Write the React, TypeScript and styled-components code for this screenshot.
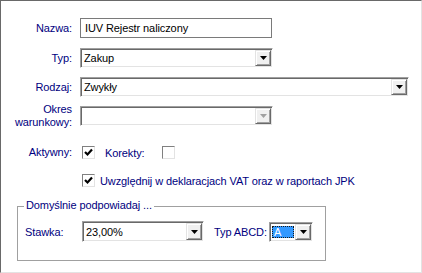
import React from 'react';
import styled, { createGlobalStyle } from 'styled-components';

const GlobalStyle = createGlobalStyle`
  body {
    margin: 0;
    background: #ffffff;
  }
`;

const Frame = styled.div`
  width: 422px;
  height: 273px;
  box-sizing: border-box;
  padding-top: 17px;
  background: #ffffff;
  border-top: 1px solid #696969;
  border-left: 1px solid #696969;
  border-right: 1px solid #e3e3e3;
  border-bottom: 1px solid #e3e3e3;

  font-family: 'Liberation Sans', Arial, sans-serif;
  font-size: 11px;
  letter-spacing: -0.1px;
  color: #000000;
`;

const Row = styled.div<{ $gap?: number }>`
  display: flex;
  align-items: center;
  height: 20px;
  margin-top: ${(p) => p.$gap ?? 0}px;
`;

const CheckRow = styled.div<{ $gap?: number }>`
  display: flex;
  align-items: center;
  height: 13px;
  margin-top: ${(p) => p.$gap ?? 0}px;
`;

const Label = styled.div`
  width: 71px;
  margin-right: 8px;
  text-align: right;
  color: #000080;
  line-height: 13px;
  white-space: nowrap;
`;

const Caption = styled.span<{ $left?: number; $width?: number }>`
  display: inline-block;
  color: #000080;
  margin-left: ${(p) => p.$left ?? 0}px;
  ${(p) => (p.$width ? `width: ${p.$width}px; flex: none;` : '')}
  white-space: nowrap;
`;

const TextBox = styled.div`
  width: 192px;
  height: 20px;
  box-sizing: border-box;
  border: 1px solid #7a7a7a;
  padding-left: 4px;
  display: flex;
  align-items: center;
`;

const Combo = styled.div<{ $width: number; $height?: number; $left?: number }>`
  width: ${(p) => p.$width}px;
  height: ${(p) => p.$height ?? 20}px;
  margin-left: ${(p) => p.$left ?? 0}px;
  flex: none;
  box-sizing: border-box;
  display: flex;
  align-items: stretch;
  background: #ffffff;
  border-top: 1px solid #a0a0a0;
  border-left: 1px solid #a0a0a0;
  border-right: 1px solid #ffffff;
  border-bottom: 1px solid #ffffff;
  box-shadow: inset 1px 1px 0 #696969, inset -1px -1px 0 #e3e3e3;
  padding: 1px;
`;

const ComboText = styled.div`
  flex: 1;
  display: flex;
  align-items: center;
  padding-left: 2px;
  white-space: nowrap;
  overflow: hidden;
`;

const Selected = styled.div`
  flex: 1;
  margin: 2px 1px 2px 1px;
  background: #3399ff;
  color: #ffffff;
  outline: 1px dotted #1a1a1a;
  outline-offset: -1px;
  display: flex;
  align-items: center;
  padding-left: 2px;
`;

const DropButton = styled.div<{ $disabled?: boolean }>`
  width: 16px;
  box-sizing: border-box;
  background: #f0f0f0;
  border-top: 1px solid #e3e3e3;
  border-left: 1px solid #e3e3e3;
  border-right: 1px solid #696969;
  border-bottom: 1px solid #696969;
  box-shadow: inset 1px 1px 0 #ffffff, inset -1px -1px 0 #a0a0a0;
  display: flex;
  align-items: center;
  justify-content: center;
  color: ${(p) => (p.$disabled ? '#a0a0a0' : '#000000')};
`;

const Check = styled.div<{ $left?: number }>`
  width: 13px;
  height: 13px;
  box-sizing: border-box;
  margin-left: ${(p) => p.$left ?? 0}px;
  background: #ffffff;
  border-top: 1px solid #808080;
  border-left: 1px solid #808080;
  border-right: 1px solid #e3e3e3;
  border-bottom: 1px solid #e3e3e3;
  display: flex;
  align-items: center;
  justify-content: center;
`;

const Group = styled.fieldset`
  width: 309px;
  box-sizing: border-box;
  margin: 12px 0 0 16px;
  padding: 0 0 18px 7px;
  border: 1px solid #a0a0a0;
`;

const Legend = styled.legend`
  padding: 0 2px 2px 2px;
  margin-left: -1px;
  line-height: 13px;
  color: #000080;
`;

const GroupRow = styled.div`
  display: flex;
  align-items: center;
  margin-top: 7px;
`;

const Arrow = () => (
  <svg width="7" height="4" viewBox="0 0 7 4">
    <path d="M0 0h7L3.5 4z" fill="currentColor" />
  </svg>
);

const Tick = () => (
  <svg width="9" height="9" viewBox="0 0 9 9">
    <polyline points="1,4 3.5,6.5 8,1.5" fill="none" stroke="#000" strokeWidth="2.2" />
  </svg>
);

const App = () => {
  return (
    <>
      <GlobalStyle />
      <Frame>
        <Row>
          <Label>Nazwa:</Label>
          <TextBox>IUV Rejestr naliczony</TextBox>
        </Row>

        <Row $gap={10}>
          <Label>Typ:</Label>
          <Combo $width={193}>
            <ComboText>Zakup</ComboText>
            <DropButton>
              <Arrow />
            </DropButton>
          </Combo>
        </Row>

        <Row $gap={9}>
          <Label>Rodzaj:</Label>
          <Combo $width={329}>
            <ComboText>Zwykły</ComboText>
            <DropButton>
              <Arrow />
            </DropButton>
          </Combo>
        </Row>

        <Row $gap={9}>
          <Label>
            Okres
            <br />
            warunkowy:
          </Label>
          <Combo $width={193}>
            <ComboText />
            <DropButton $disabled>
              <Arrow />
            </DropButton>
          </Combo>
        </Row>

        <CheckRow $gap={20}>
          <Label>Aktywny:</Label>
          <Check $left={2}>
            <Tick />
          </Check>
          <Caption $left={10}>Korekty:</Caption>
          <Check $left={17} />
        </CheckRow>

        <CheckRow $gap={15}>
          <Label />
          <Check $left={2}>
            <Tick />
          </Check>
          <Caption $left={5}>Uwzględnij w deklaracjach VAT oraz w raportach JPK</Caption>
        </CheckRow>

        <Group>
          <Legend>Domyślnie podpowiadaj ...</Legend>
          <GroupRow>
            <Caption $width={57}>Stawka:</Caption>
            <Combo $width={122} $height={21}>
              <ComboText>23,00%</ComboText>
              <DropButton>
                <Arrow />
              </DropButton>
            </Combo>
            <Caption $left={10} $width={55}>Typ ABCD:</Caption>
            <Combo $width={44}>
              <Selected>A</Selected>
              <DropButton>
                <Arrow />
              </DropButton>
            </Combo>
          </GroupRow>
        </Group>
      </Frame>
    </>
  );
};

export default App;
